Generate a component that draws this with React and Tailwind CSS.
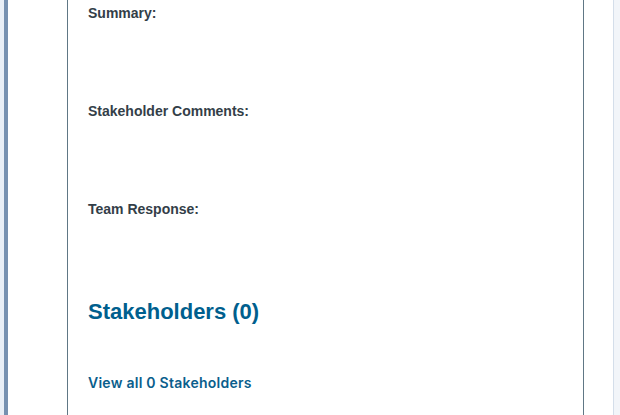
import React from 'react';

const LABELS = [
  { text: 'Summary:', h: 'h-[98px]' },
  { text: 'Stakeholder Comments:', h: 'h-[98px]' },
  { text: 'Team Response:', h: 'h-[99px]' },
];

export default function App() {
  const count = 0;

  return (
    <div className="flex h-[415px] w-[620px] overflow-hidden bg-[#f2f5f9] font-['Liberation_Sans',Arial,sans-serif]">
      {/* side rail */}
      <div className="w-[4px] shrink-0 bg-[#e9eff6]" />
      <div className="w-[4px] shrink-0 bg-[#7791b0]" />

      <main className="flex w-[606px] shrink-0 bg-white pl-[59px] pr-[29px] border-r border-[#d4deea]">
        <section className="flex-1 border-x border-[#607785] px-[20px] pt-[3px]">
          {LABELS.map((l) => (
            <div key={l.text} className={l.h}>
              <h4 className="text-[14px] leading-[20px] font-bold text-[#333e48]">{l.text}</h4>
            </div>
          ))}

          <h2 className="text-[22px] leading-[28px] font-bold text-[#005f8e] mb-[47px]">
            Stakeholders ({count})
          </h2>

          <a href="#" className="block text-[14px] leading-[20px] font-semibold tracking-[0.25px] text-[#0a5e8c] font-['Inter',sans-serif]">
            View all {count} Stakeholders
          </a>
        </section>
      </main>

      <div className="flex-1" />
    </div>
  );
}
